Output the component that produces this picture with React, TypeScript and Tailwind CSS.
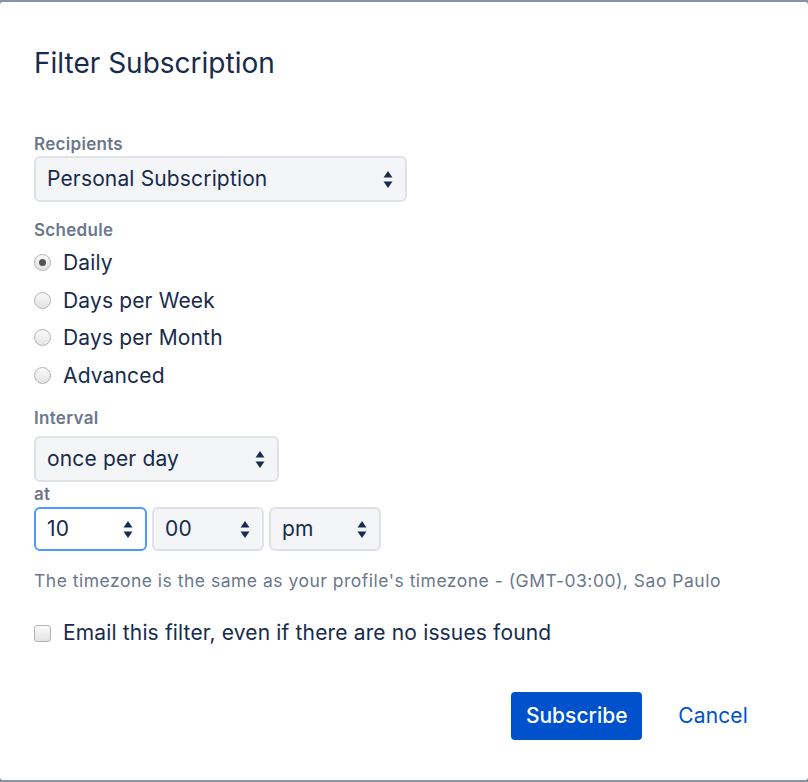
import React from "react";

function Arrows() {
	return (
		<svg width="10" height="19" viewBox="0 0 10 19" className="shrink-0">
			<path d="M5 1 L9.5 7.5 H0.5 Z" fill="#172b4d" />
			<path d="M5 18 L9.5 11.5 H0.5 Z" fill="#172b4d" />
		</svg>
	);
}

function SelectBox({
	value,
	width,
	height = "h-[46px]",
	focused = false,
}: {
	value: string;
	width: string;
	height?: string;
	focused?: boolean;
}) {
	return (
		<div
			className={`${width} ${height} flex items-center justify-between rounded-[6px] border-2 pl-[11px] pr-[12px] text-[21px] tracking-[0.15px] text-[#172b4d] ${
				focused ? "border-[#4c9aff] bg-white" : "border-[#dfe1e6] bg-[#f4f5f7]"
			}`}
		>
			<span>{value}</span>
			<Arrows />
		</div>
	);
}

function Radio({ label, checked = false }: { label: string; checked?: boolean }) {
	return (
		<div className="flex h-[37.5px] items-center gap-[12px]">
			<div className="flex h-[17px] w-[17px] items-center justify-center rounded-full border border-[#b3b3b3] bg-gradient-to-b from-[#fafafa] to-[#e3e3e3]">
				{checked && <div className="h-[7px] w-[7px] rounded-full bg-[#555]" />}
			</div>
			<span className="text-[21px] tracking-[0.15px] text-[#172b4d]">{label}</span>
		</div>
	);
}

const label = "text-[17px] font-semibold leading-[22px] tracking-[0.3px] text-[#6b778c]";

export default function App() {
	return (
		<div
			className="min-h-screen bg-[#8993a4] py-[2px]"
			style={{ fontFamily: "Inter, 'Liberation Sans', sans-serif" }}
		>
			<div className="flex h-[778px] flex-col rounded-[3px] bg-white pl-[34px]">
				<h1 className="mt-[45px] text-[28px] leading-[32px] text-[#172b4d]">Filter Subscription</h1>

				<div className={`mt-[54px] ${label}`}>Recipients</div>
				<div className="mt-[1px]">
					<SelectBox value="Personal Subscription" width="w-[373px]" />
				</div>

				<div className={`mt-[17px] ${label}`}>Schedule</div>
				<div className="mt-[3px] flex flex-col">
					<Radio label="Daily" checked />
					<Radio label="Days per Week" />
					<Radio label="Days per Month" />
					<Radio label="Advanced" />
				</div>

				<div className={`mt-[13px] ${label}`}>Interval</div>
				<div className="mt-[7px]">
					<SelectBox value="once per day" width="w-[245px]" />
				</div>
				<div className={`mt-[1px] ${label}`}>at</div>
				<div className="mt-[2px] flex gap-[5px]">
					<SelectBox value="10" width="w-[113px]" height="h-[44px]" focused />
					<SelectBox value="00" width="w-[112px]" height="h-[44px]" />
					<SelectBox value="pm" width="w-[112px]" height="h-[44px]" />
				</div>

				<p className="mt-[19px] text-[17.5px] leading-[22px] tracking-[0.5px] text-[#6b778c]">
					The timezone is the same as your profile's timezone - (GMT-03:00), Sao Paulo
				</p>

				<div className="mt-[27px] flex items-center gap-[12px]">
					<div className="h-[17px] w-[17px] rounded-[3px] border border-[#b3b3b3] bg-gradient-to-b from-[#fafafa] to-[#e3e3e3]" />
					<span className="text-[21px] leading-[28px] tracking-[0.15px] text-[#172b4d]">
						Email this filter, even if there are no issues found
					</span>
				</div>

				<div className="mt-[45px] flex items-center justify-end pr-[60px]">
					<button className="h-[48px] w-[131px] rounded-[4px] bg-[#0052cc] text-[21px] font-medium text-white">
						Subscribe
					</button>
					<button className="ml-[36px] text-[21px] tracking-[0.15px] text-[#0052cc]">Cancel</button>
				</div>
			</div>
		</div>
	);
}
